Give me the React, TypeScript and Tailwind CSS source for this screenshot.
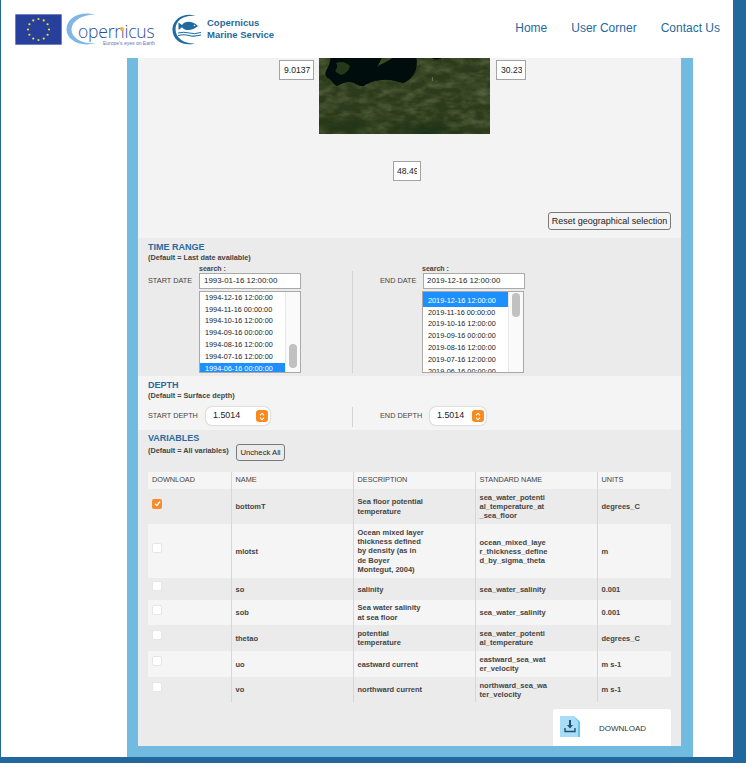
const FONT = "font-['Liberation_Sans',Arial,sans-serif]";

function EuFlag() {
  const stars = Array.from({ length: 12 }, (_, i) => {
    const a = (i * Math.PI) / 6;
    return { x: 23.5 + 10.5 * Math.sin(a), y: 15.5 - 10.5 * Math.cos(a) };
  });
  return (
    <svg width="47" height="31" viewBox="0 0 47 31" className="shrink-0">
      <rect width="47" height="31" fill="#27409c" stroke="#b9c3e0" strokeWidth="1" />
      {stars.map((s, i) => (
        <circle key={i} cx={s.x} cy={s.y} r="1.1" fill="#f3dc2c" />
      ))}
    </svg>
  );
}

function CopernicusLogo() {
  return (
    <div className="relative w-[92px] h-[34px] ml-[4px] shrink-0">
      <svg width="36" height="34" viewBox="0 0 36 34" className="absolute left-0 top-0">
        <path d="M29 2.500C15 -1 1 5 0.500 17C0 27 13 36 30 31C17 33 5 26 5.500 17C6 9 16 2.500 29 2.500Z" fill="#7db7e2" />
      </svg>
      <span className="absolute left-[12px] top-[12px] text-[17.500px] leading-[15px] tracking-[-0.2px] text-[#2c4f9e] font-['Open_Sans',sans-serif] font-light">opernicus</span>
      <span className="absolute left-[37px] top-[27.500px] text-[5px] leading-[6px] text-[#5a78b5] whitespace-nowrap">Europe's eyes on Earth</span>
      <span className="absolute left-[54px] top-[15px] w-[4px] h-[4px] rounded-full bg-[#f2b632]" />
    </div>
  );
}

function MarineLogo() {
  return (
    <svg width="30" height="33" viewBox="0 0 30 33" className="shrink-0">
      <path d="M25 3C15 -1 3 4 1.500 15C0.500 26 11 34 24 30.500C14 31 4.500 26 4.500 16C4.500 7 14 1.500 25 3Z" fill="#1f6a9e" />
      <path d="M7 20Q13 18.500 18 20T30 19.500" stroke="#1f6a9e" strokeWidth="1" fill="none" />
      <path d="M7 22.500Q13 21 18 22.500T30 22" stroke="#1f6a9e" strokeWidth="1.200" fill="none" />
      <path d="M7.500 9.500L11 12C14 7.800 21 7.500 27 13C21 18.500 14 18 11 14.200L7.500 17Z" fill="#1f6a9e" />
      <circle cx="23.500" cy="12.500" r="0.800" fill="#fff" />
    </svg>
  );
}

function SatelliteMap() {
  return (
    <svg width="171" height="76" viewBox="0 0 171 76" className="shrink-0 block">
      <defs>
        <filter id="mottle" x="0" y="0" width="100%" height="100%">
          <feTurbulence type="fractalNoise" baseFrequency="0.07 0.13" numOctaves="3" seed="11" />
          <feColorMatrix values="0 0 0 0 0.36  0 0 0 0 0.39  0 0 0 0 0.2  1.400 0 0 0 -0.500" />
          <feGaussianBlur stdDeviation="0.600" />
        </filter>
        <filter id="soft" x="-10%" y="-20%" width="120%" height="140%">
          <feGaussianBlur stdDeviation="0.700" />
        </filter>
        <filter id="softer" x="-30%" y="-50%" width="160%" height="200%">
          <feGaussianBlur stdDeviation="4" />
        </filter>
      </defs>
      <rect width="171" height="76" fill="#2c3b1b" />
      <rect width="171" height="76" filter="url(#mottle)" opacity="0.450" />
      <ellipse cx="105" cy="72" rx="32" ry="6" fill="#1c3013" filter="url(#softer)" />
      <ellipse cx="25" cy="68" rx="26" ry="7" fill="#233517" filter="url(#softer)" />
      <g filter="url(#soft)">
        <path d="M12 -2C11 4 10 8 8 11C5 15 7 19 9 20C13 22 15 27 18 28C22 26 25 24 31 24C37 25 40 29 45 28C50 24 58 22 64 22C70 21 76 23 84 25C90 23 95 18 97 11C98 6 98 2 97 -2L76 -2C70 3 62 6 58 9C60 5 62 2 64 -2L60 -2Z" fill="#040907" />
        <path d="M17 5C22 3 27 4 31 8C30 13 26 16 22 17C19 15 15 14 17 11C19 9 18 7 17 5Z" fill="#26381b" />
        <path d="M113 -2L125 -2C123 1 118 2 114 1Z" fill="#040907" />
      </g>
      <rect x="113" y="19" width="1" height="4" fill="#8d9170" opacity="0.600" />
    </svg>
  );
}

function ListBox({ items, selected, thumbTop, padFirst }: { items: string[]; selected: number; thumbTop: number; padFirst?: boolean }) {
  return (
    <div className="mt-[2px] relative flex w-[102px] h-[82px] border border-[#a9a9a9] bg-white overflow-hidden">
      <div className="flex-1 min-w-0 text-[7.300px] leading-[12px]">
        {items.map((t, i) => {
          const size = padFirst && i === 0 ? "h-[15px] pt-[3px]" : i === 1 ? "h-[11px]" : "h-[12px]";
          return (
            <div key={t} className={`${size} pl-[5px] whitespace-nowrap ${i === selected ? "bg-[#1e8fff] text-white" : "text-[#222]"}`}>
              {t}
            </div>
          );
        })}
      </div>
      <div className="w-[15px] shrink-0 bg-[#fafafa] border-l border-[#e8e8e8] pl-[3px]">
        <div className="w-[8px] h-[24px] rounded-full bg-[#c1c1c1]" style={{ marginTop: thumbTop }} />
      </div>
    </div>
  );
}

function DepthSelect({ className }: { className: string }) {
  return (
    <div className={`h-[18px] bg-white rounded-[6px] shadow-[0_0_2px_rgba(0,0,0,0.3)] flex items-center justify-between pr-[2px] ${className}`}>
      <span className="text-[8.900px] text-[#222]">1.5014</span>
      <span className="w-[12px] h-[12px] rounded-[3px] bg-[#fb8a1d] flex items-center justify-center">
        <svg width="6" height="9" viewBox="0 0 6 9" fill="none" stroke="#fff" strokeWidth="1.100">
          <path d="M1 3.300L3 1.200L5 3.300M1 5.700L3 7.800L5 5.700" />
        </svg>
      </span>
    </div>
  );
}

function CoordBox({ value, className, inner }: { value: string; className: string; inner: string }) {
  return (
    <div className={`h-[20px] border border-[#a3a3a3] bg-white ${className}`}>
      <div className={`h-[18px] overflow-hidden whitespace-nowrap text-[8.600px] leading-[18px] text-[#222] ${inner}`}>{value}</div>
    </div>
  );
}

const START = ["1994-12-16 12:00:00", "1994-11-16 00:00:00", "1994-10-16 12:00:00", "1994-09-16 00:00:00", "1994-08-16 12:00:00", "1994-07-16 12:00:00", "1994-06-16 00:00:00"];
const END = ["2019-12-16 12:00:00", "2019-11-16 00:00:00", "2019-10-16 12:00:00", "2019-09-16 00:00:00", "2019-08-16 12:00:00", "2019-07-16 12:00:00", "2019-06-16 00:00:00"];

const ROWS = [
  { h: "h-[35px]", name: "bottomT", desc: ["Sea floor potential", "temperature"], dl: "leading-[10px]", std: ["sea_water_potenti", "al_temperature_at", "_sea_floor"], unit: "degrees_C", checked: true },
  { h: "h-[54px]", name: "mlotst", desc: ["Ocean mixed layer", "thickness defined", "by density (as in", "de Boyer", "Montegut, 2004)"], dl: "leading-[9.200px]", std: ["ocean_mixed_laye", "r_thickness_define", "d_by_sigma_theta"], unit: "m" },
  { h: "h-[22px]", name: "so", desc: ["salinity"], dl: "", std: ["sea_water_salinity"], unit: "0.001" },
  { h: "h-[25px]", name: "sob", desc: ["Sea water salinity", "at sea floor"], dl: "leading-[10px]", std: ["sea_water_salinity"], unit: "0.001" },
  { h: "h-[26px]", name: "thetao", desc: ["potential", "temperature"], dl: "", std: ["sea_water_potenti", "al_temperature"], unit: "degrees_C" },
  { h: "h-[26px]", name: "uo", desc: ["eastward current"], dl: "", std: ["eastward_sea_wat", "er_velocity"], unit: "m s-1" },
  { h: "h-[25px]", name: "vo", desc: ["northward current"], dl: "", std: ["northward_sea_wa", "ter_velocity"], unit: "m s-1" },
];

function Check({ checked }: { checked?: boolean }) {
  return checked ? (
    <span className="w-[10px] h-[10px] rounded-[2px] bg-[#fb8a2c] flex items-center justify-center">
      <svg width="7" height="7" viewBox="0 0 7 7" fill="none" stroke="#fff" strokeWidth="1.300"><path d="M1 3.700L2.800 5.500L6 1.500" /></svg>
    </span>
  ) : (
    <span className="w-[10px] h-[10px] rounded-[2px] bg-white border border-[#e6e6e6]" />
  );
}

export default function App() {
  const cell = "px-[4px] border-l border-[#d6d6d6] align-middle";
  return (
    <div className={`${FONT} w-[746px] h-[763px] overflow-hidden bg-[#21699c] pl-px pr-[13px] pb-[6px]`}>
      <div className="h-[757px] bg-white flex flex-col">
        <header className="h-[58px] shrink-0 flex items-center pl-[14px] pr-[13px]">
          <EuFlag />
          <CopernicusLogo />
          <div className="ml-[13px]"><MarineLogo /></div>
          <div className="ml-[6px] text-[9.500px] leading-[12px] font-bold text-[#1f6a9e] whitespace-nowrap">
            <div>Copernicus</div>
            <div>Marine Service</div>
          </div>
          <nav className="ml-auto flex gap-[24px] text-[12px] text-[#1f6a9e] pb-[3px]">
            <span>Home</span>
            <span>User Corner</span>
            <span>Contact Us</span>
          </nav>
        </header>

        <div className="flex-1 ml-[126px] mr-[40px] bg-[#72bbe0] px-[11px] pb-[11px] flex min-h-0">
          <main className="w-[543px] flex flex-col">
            <section className="h-[180px] shrink-0 bg-[#f3f3f3]">
              <div className="flex items-start pl-[141px]">
                <CoordBox value="9.0137" className="mt-[2px] w-[35px]" inner="pl-[4px]" />
                <div className="ml-[5px]"><SatelliteMap /></div>
                <CoordBox value="30.23" className="ml-[6px] mt-[2px] w-[30px]" inner="ml-[4px] w-[21px]" />
              </div>
              <div className="pl-[255px] mt-[27px]">
                <CoordBox value="48.49" className="w-[28px]" inner="ml-[3px] w-[20px]" />
              </div>
              <div className="flex justify-end pr-[10px] mt-[31px]">
                <div className="h-[18px] w-[123px] border border-[#7a7a7a] rounded-[3px] bg-[#f3f3f3] text-[9px] leading-[16px] text-center text-[#222] whitespace-nowrap">Reset geographical selection</div>
              </div>
            </section>

            <section className="h-[138px] shrink-0 bg-[#ebebeb] pl-[10px] pt-[4px]">
              <h2 className="text-[9px] leading-[11px] font-bold text-[#2a6a9e]">TIME RANGE</h2>
              <p className="text-[7.300px] leading-[10px] font-bold text-[#444]">(Default = Last date available)</p>
              <div className="flex mt-[1px]">
                <div className="w-[204px] flex">
                  <div className="w-[51px] pt-[11px] text-[7.300px] leading-[12px] text-[#444] whitespace-nowrap">START DATE</div>
                  <div>
                    <div className="h-[9px] text-[7px] leading-[9px] font-bold text-[#444]">search :</div>
                    <div className="h-[16px] w-[102px] border border-[#a9a9a9] bg-white text-[7.900px] leading-[14px] pl-[4px] text-[#222]">1993-01-16 12:00:00</div>
                    <ListBox items={START} selected={6} thumbTop={52} />
                  </div>
                </div>
                <div className="w-px h-[102px] mt-[7px] bg-[#d3d3d3]" />
                <div className="pl-[27px] flex">
                  <div className="w-[42px] pt-[11px] text-[7.300px] leading-[12px] text-[#444] whitespace-nowrap">END DATE</div>
                  <div>
                    <div className="h-[9px] text-[7px] leading-[9px] font-bold text-[#444]">search :</div>
                    <div className="h-[16px] w-[102px] ml-px border border-[#a9a9a9] bg-white text-[7.900px] leading-[14px] pl-[3px] text-[#222]">2019-12-16 12:00:00</div>
                    <ListBox items={END} selected={0} thumbTop={1} padFirst />
                  </div>
                </div>
              </div>
            </section>

            <section className="h-[54px] shrink-0 bg-[#f4f4f4] pl-[10px] pt-[4px]">
              <h2 className="text-[9px] leading-[11px] font-bold text-[#2a6a9e]">DEPTH</h2>
              <p className="text-[7.300px] leading-[10px] font-bold text-[#444]">(Default = Surface depth)</p>
              <div className="flex mt-[6px]">
                <div className="w-[204px] flex items-start">
                  <div className="w-[58px] text-[7.300px] leading-[18px] text-[#444] whitespace-nowrap">START DEPTH</div>
                  <DepthSelect className="w-[64px] pl-[7px]" />
                </div>
                <div className="w-px h-[20px] bg-[#d3d3d3]" />
                <div className="pl-[27px] flex items-start">
                  <div className="w-[50px] text-[7.300px] leading-[18px] text-[#444] whitespace-nowrap">END DEPTH</div>
                  <DepthSelect className="w-[56px] pl-[7px]" />
                </div>
              </div>
            </section>

            <section className="flex-1 bg-[#ebebeb] pl-[10px] pr-[10px] pt-[3px] flex flex-col">
              <h2 className="text-[9px] leading-[11px] font-bold text-[#2a6a9e]">VARIABLES</h2>
              <div className="flex items-start">
                <p className="w-[88px] mt-[2px] text-[7.300px] leading-[10px] font-bold text-[#444] whitespace-nowrap">(Default = All variables)</p>
                <div className="w-[49px] h-[17px] border border-[#7a7a7a] rounded-[3px] text-[7.700px] leading-[15px] text-center text-[#222] whitespace-nowrap">Uncheck All</div>
              </div>
              <table className="mt-[11px] w-[523px] table-fixed border-collapse text-[7.500px] text-[#444]">
                <colgroup>
                  <col className="w-[83px]" />
                  <col className="w-[122px]" />
                  <col className="w-[122px]" />
                  <col className="w-[122px]" />
                  <col className="w-[74px]" />
                </colgroup>
                <thead>
                  <tr className="h-[17px] bg-[#f5f5f5] text-[7.300px] text-left">
                    <th className="px-[4px] font-normal">DOWNLOAD</th>
                    <th className={`${cell} font-normal`}>NAME</th>
                    <th className={`${cell} font-normal`}>DESCRIPTION</th>
                    <th className={`${cell} font-normal`}>STANDARD NAME</th>
                    <th className={`${cell} font-normal`}>UNITS</th>
                  </tr>
                </thead>
                <tbody className="font-bold leading-[9px]">
                  {ROWS.map((r, i) => (
                    <tr key={r.name} className={`${r.h} ${i % 2 === 0 ? "bg-[#ebebeb]" : "bg-[#f5f5f5]"}`}>
                      <td className="px-[4px] pb-[6px] align-middle"><div className="flex"><Check checked={r.checked} /></div></td>
                      <td className={cell}>{r.name}</td>
                      <td className={cell}><div className={r.dl}>{r.desc.map((l) => <div key={l}>{l}</div>)}</div></td>
                      <td className={cell}>{r.std.map((l) => <div key={l}>{l}</div>)}</td>
                      <td className={cell}>{r.unit}</td>
                    </tr>
                  ))}
                </tbody>
              </table>
              <div className="mt-auto self-end w-[118px] h-[37px] bg-white rounded-t-[2px] flex items-center pl-[7px]">
                <svg width="20" height="21" viewBox="0 0 20 21" className="shrink-0 mb-[2px]">
                  <path d="M0 0H14L20 6V21H0Z" fill="#a9dcf7" />
                  <path d="M14 0L20 6V21H18V6Z" fill="#6cc3ea" />
                  <path d="M9 4H11V9H13L10 12.500L7 9H9Z" fill="#24506e" />
                  <path d="M5 12V15.500H15V12" fill="none" stroke="#24506e" strokeWidth="1.400" />
                </svg>
                <span className="ml-[19px] mt-[3px] text-[8px] text-[#333]">DOWNLOAD</span>
              </div>
            </section>
          </main>
        </div>
      </div>
    </div>
  );
}
